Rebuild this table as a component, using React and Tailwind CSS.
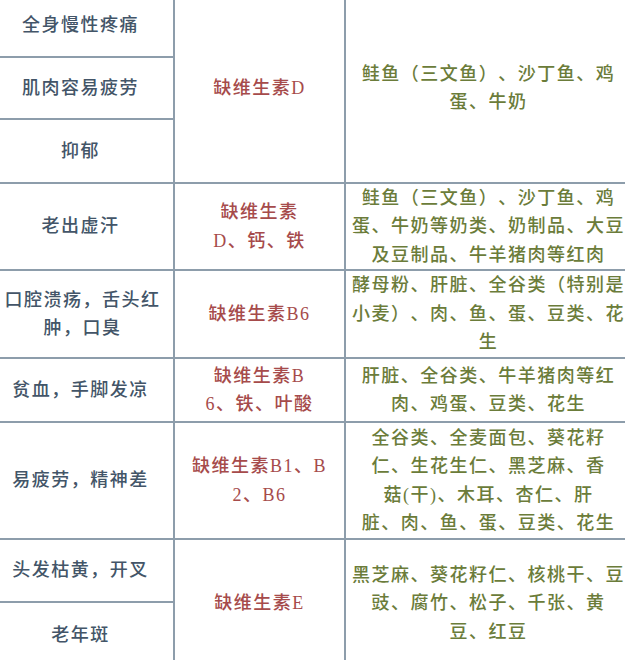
import React from "react";

const C1 = "text-[#435568]";
const C2 = "text-[#a64b4b]";
const C3 = "text-[#6b7c3a]";

function Cell({ lines, color, className = "" }) {
  return (
    <div className={`bg-white flex items-center justify-center text-center ${className}`}>
      <div className={`${color} whitespace-nowrap`}>
        {lines.map((l, i) => (
          <div key={i}>{l}</div>
        ))}
      </div>
    </div>
  );
}

export default function App() {
  return (
    <div className="w-[625px] h-[660px] overflow-hidden bg-white">
      <div
        className="mt-[-6px] grid grid-cols-[173px_169px_1fr] grid-rows-[62px_60px_62px_85px_86px_62px_115px_61px_64px] gap-[2px] bg-[#8d9dab] text-[18px] font-medium leading-[28.5px] tracking-[1.5px] [text-spacing-trim:space-all]"
        style={{ fontFamily: '"Liberation Serif", "Noto Sans CJK SC", serif' }}
      >
        {/* group 1 */}
        <Cell lines={["全身慢性疼痛"]} color={C1} className="col-start-1 row-start-1 pr-[12px]" />
        <Cell lines={["肌肉容易疲劳"]} color={C1} className="col-start-1 row-start-2 pr-[12px]" />
        <Cell lines={["抑郁"]} color={C1} className="col-start-1 row-start-3 pr-[12px]" />
        <Cell lines={["缺维生素D"]} color={C2} className="col-start-2 row-start-1 row-span-3" />
        <Cell
          lines={["鲑鱼（三文鱼）、沙丁鱼、鸡", "蛋、牛奶"]}
          color={C3}
          className="col-start-3 row-start-1 row-span-3 pl-[6px]"
        />

        {/* group 2 */}
        <Cell lines={["老出虚汗"]} color={C1} className="col-start-1 row-start-4 pr-[12px]" />
        <Cell lines={["缺维生素", "D、钙、铁"]} color={C2} className="col-start-2 row-start-4" />
        <Cell
          lines={["鲑鱼（三文鱼）、沙丁鱼、鸡", "蛋、牛奶等奶类、奶制品、大豆", "及豆制品、牛羊猪肉等红肉"]}
          color={C3}
          className="col-start-3 row-start-4 pl-[6px]"
        />

        {/* group 3 */}
        <Cell lines={["口腔溃疡，舌头红", "肿，口臭"]} color={C1} className="col-start-1 row-start-5 pr-[8px]" />
        <Cell lines={["缺维生素B6"]} color={C2} className="col-start-2 row-start-5" />
        <Cell
          lines={["酵母粉、肝脏、全谷类（特别是", "小麦）、肉、鱼、蛋、豆类、花", "生"]}
          color={C3}
          className="col-start-3 row-start-5 pl-[6px]"
        />

        {/* group 4 */}
        <Cell lines={["贫血，手脚发凉"]} color={C1} className="col-start-1 row-start-6 pr-[12px]" />
        <Cell lines={["缺维生素B", "6、铁、叶酸"]} color={C2} className="col-start-2 row-start-6" />
        <Cell
          lines={["肝脏、全谷类、牛羊猪肉等红", "肉、鸡蛋、豆类、花生"]}
          color={C3}
          className="col-start-3 row-start-6 pl-[6px]"
        />

        {/* group 5 */}
        <Cell lines={["易疲劳，精神差"]} color={C1} className="col-start-1 row-start-7 pr-[12px]" />
        <Cell
          lines={["缺维生素B1、B", "2、B6"]}
          color={C2}
          className="col-start-2 row-start-7 items-start pt-[29px]"
        />
        <Cell
          lines={["全谷类、全麦面包、葵花籽", "仁、生花生仁、黑芝麻、香", "菇(干)、木耳、杏仁、肝", "脏、肉、鱼、蛋、豆类、花生"]}
          color={C3}
          className="col-start-3 row-start-7 pl-[6px]"
        />

        {/* group 6 */}
        <Cell lines={["头发枯黄，开叉"]} color={C1} className="col-start-1 row-start-8 pr-[12px]" />
        <Cell lines={["老年斑"]} color={C1} className="col-start-1 row-start-9 pr-[12px]" />
        <Cell lines={["缺维生素E"]} color={C2} className="col-start-2 row-start-8 row-span-2" />
        <Cell
          lines={["黑芝麻、葵花籽仁、核桃干、豆", "豉、腐竹、松子、千张、黄", "豆、红豆"]}
          color={C3}
          className="col-start-3 row-start-8 row-span-2 pl-[6px]"
        />
      </div>
    </div>
  );
}
